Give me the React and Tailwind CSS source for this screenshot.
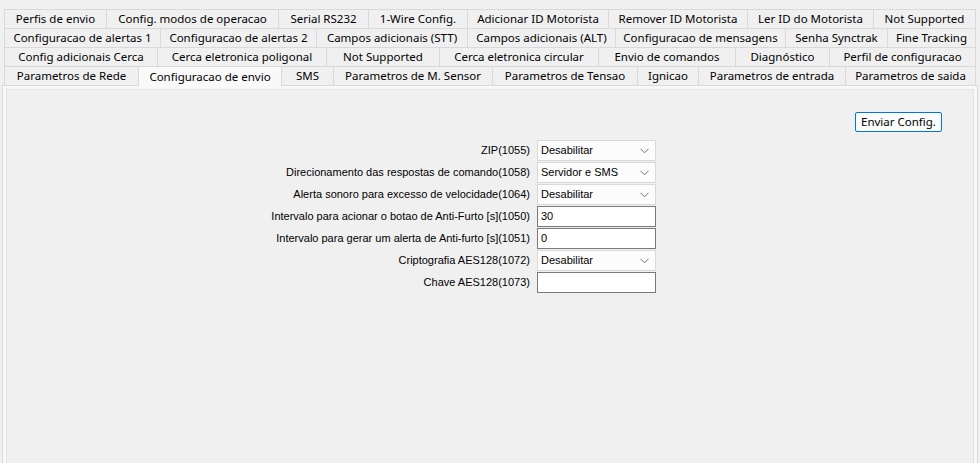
import React from "react";

const rows = [
  [
    ["Perfis de envio", 102],
    ["Config. modos de operacao", 172],
    ["Serial RS232", 90],
    ["1-Wire Config.", 99],
    ["Adicionar ID Motorista", 141],
    ["Remover ID Motorista", 139],
    ["Ler ID do Motorista", 126],
    ["Not Supported", 103],
  ],
  [
    ["Configuracao de alertas 1", 156],
    ["Configuracao de alertas 2", 156],
    ["Campos adicionais (STT)", 151],
    ["Campos adicionais (ALT)", 148],
    ["Configuracao de mensagens", 170],
    ["Senha Synctrak", 102],
    ["Fine Tracking", 89],
  ],
  [
    ["Config adicionais Cerca", 153],
    ["Cerca eletronica poligonal", 169],
    ["Not Supported", 113],
    ["Cerca eletronica circular", 159],
    ["Envio de comandos", 137],
    ["Diagnóstico", 94],
    ["Perfil de configuracao", 147],
  ],
  [
    ["Parametros de Rede", 134],
    ["Configuracao de envio", 143, true],
    ["SMS", 52],
    ["Parametros de M. Sensor", 159],
    ["Parametros de Tensao", 145],
    ["Ignicao", 61],
    ["Parametros de entrada", 147],
    ["Parametros de saida", 131],
  ],
];

function Chevron() {
  return (
    <svg width="9" height="6" viewBox="0 0 9 6" className="shrink-0">
      <path d="M0.5 0.8 L4.5 4.8 L8.5 0.8" fill="none" stroke="#707070" strokeWidth="1" />
    </svg>
  );
}

function Select({ value }) {
  return (
    <div className="h-[21px] flex items-center justify-between border border-[#d9d9d9] bg-[#fcfcfc] pl-[3px] pr-[6px] text-[11px] text-black">
      <span>{value}</span>
      <Chevron />
    </div>
  );
}

function TextBox({ value }) {
  return (
    <div className="h-[21px] flex items-center border border-[#7a7a7a] bg-white pl-[3px] text-[11px] text-black">
      {value}
    </div>
  );
}

const fields = [
  ["ZIP(1055)", "select", "Desabilitar"],
  ["Direcionamento das respostas de comando(1058)", "select", "Servidor e SMS"],
  ["Alerta sonoro para excesso de velocidade(1064)", "select", "Desabilitar"],
  ["Intervalo para acionar o botao de Anti-Furto [s](1050)", "text", "30"],
  ["Intervalo para gerar um alerta de Anti-furto [s](1051)", "text", "0"],
  ["Criptografia AES128(1072)", "select", "Desabilitar"],
  ["Chave AES128(1073)", "text", ""],
];

export default function App() {
  return (
    <div className="w-[980px] h-[463px] overflow-hidden bg-[#f0f0f0] pt-[9px]" style={{ fontFamily: '"Liberation Sans", Arial, sans-serif' }}>
      <div className="ml-[4px] w-[972px]" style={{ fontFamily: '"Noto Sans", "Liberation Sans", sans-serif' }}>
        {rows.map((row, ri) => (
          <div key={ri} className="flex h-[19px]">
            {row.map(([label, w, sel], ti) => (
              <div
                key={ti}
                style={{ width: w }}
                className={
                  "h-[19px] flex items-center justify-center border-t border-l border-[#d9d9d9] text-[11.5px] leading-none text-black whitespace-nowrap " +
                  (ti === row.length - 1 ? "border-r " : "") +
                  (sel ? "bg-[#f9f9f9] relative z-10 h-[20px]" : "bg-[#f0f0f0]")
                }
              >
                {label}
              </div>
            ))}
          </div>
        ))}
      </div>
      <div className="ml-[2px] w-[976px] h-[400px] border border-[#d9d9d9] bg-[#f9f9f9] p-[3px]">
        <div className="h-full bg-[#f0f0f0] border border-[#e3e3e3]">
          <div className="flex justify-end pt-[22px] pr-[31px]">
            <div
              className="w-[87px] h-[20px] flex items-center justify-center border border-[#0078d7] rounded-[2px] bg-[#fbfbfb] text-[11.5px] text-black"
              style={{ fontFamily: '"Noto Sans", "Liberation Sans", sans-serif' }}
            >
              Enviar Config.
            </div>
          </div>
          <div className="mt-[8px] w-[649px] grid grid-cols-[1fr_119px] gap-x-[7px] gap-y-[1px]">
            {fields.map(([label, type, value], i) => (
              <React.Fragment key={i}>
                <div className="h-[21px] flex items-center justify-end text-[11px] text-black whitespace-nowrap">{label}</div>
                {type === "select" ? <Select value={value} /> : <TextBox value={value} />}
              </React.Fragment>
            ))}
          </div>
        </div>
      </div>
    </div>
  );
}
